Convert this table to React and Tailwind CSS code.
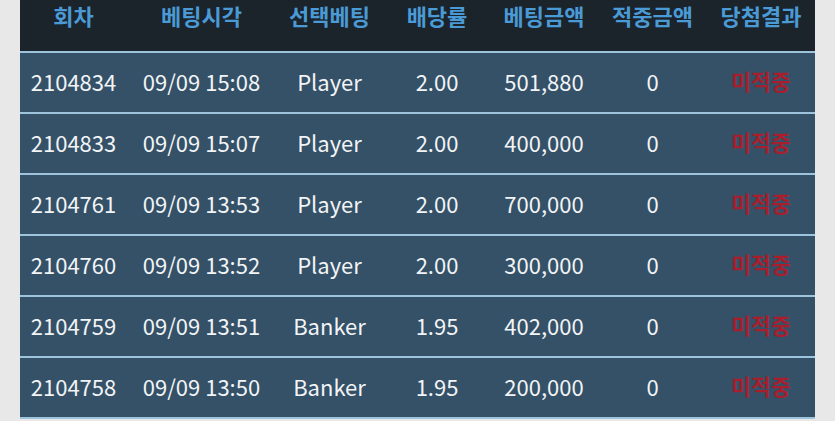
import React from "react";

const cols = ["회차", "베팅시각", "선택베팅", "배당률", "베팅금액", "적중금액", "당첨결과"];

const rows = [
  ["2104834", "09/09 15:08", "Player", "2.00", "501,880", "0"],
  ["2104833", "09/09 15:07", "Player", "2.00", "400,000", "0"],
  ["2104761", "09/09 13:53", "Player", "2.00", "700,000", "0"],
  ["2104760", "09/09 13:52", "Player", "2.00", "300,000", "0"],
  ["2104759", "09/09 13:51", "Banker", "1.95", "402,000", "0"],
  ["2104758", "09/09 13:50", "Banker", "1.95", "200,000", "0"],
];

const grid = "grid grid-cols-[117px_129px_118px_106px_108px_109px_108px]";
const pad = ["pr-[10px]", "", "pl-[9px]", "", "", "", ""];

export default function App() {
  return (
    <div className="w-[835px] h-[421px] overflow-hidden bg-[#e8e8e8] pl-[20px] font-['Noto_Sans_CJK_KR','Noto_Sans',sans-serif]">
      <div className="w-[795px]">
        <div className={`${grid} h-[53px] bg-[#1b232b] border-b-2 border-[#9ec3dc] items-start pt-[1px]`}>
          {cols.map((c, i) => (
            <div key={c} className={`${pad[i]} text-center text-[22px] leading-[28px] font-bold text-[#4a9ad6]`}>{c}</div>
          ))}
        </div>
        {rows.map(r => (
          <div key={r[0]} className={`${grid} h-[61px] pb-[3px] bg-[#345168] border-b-2 border-[#9ec3dc] items-center`}>
            {r.map((v, i) => (
              <div key={i} className={`${pad[i]} text-center text-[22px] leading-[28px] text-[#f2f4f6]`}>{v}</div>
            ))}
            <div className="text-center text-[21.5px] leading-[28px] font-bold text-[#a81e2c]">미적중</div>
          </div>
        ))}
      </div>
    </div>
  );
}
